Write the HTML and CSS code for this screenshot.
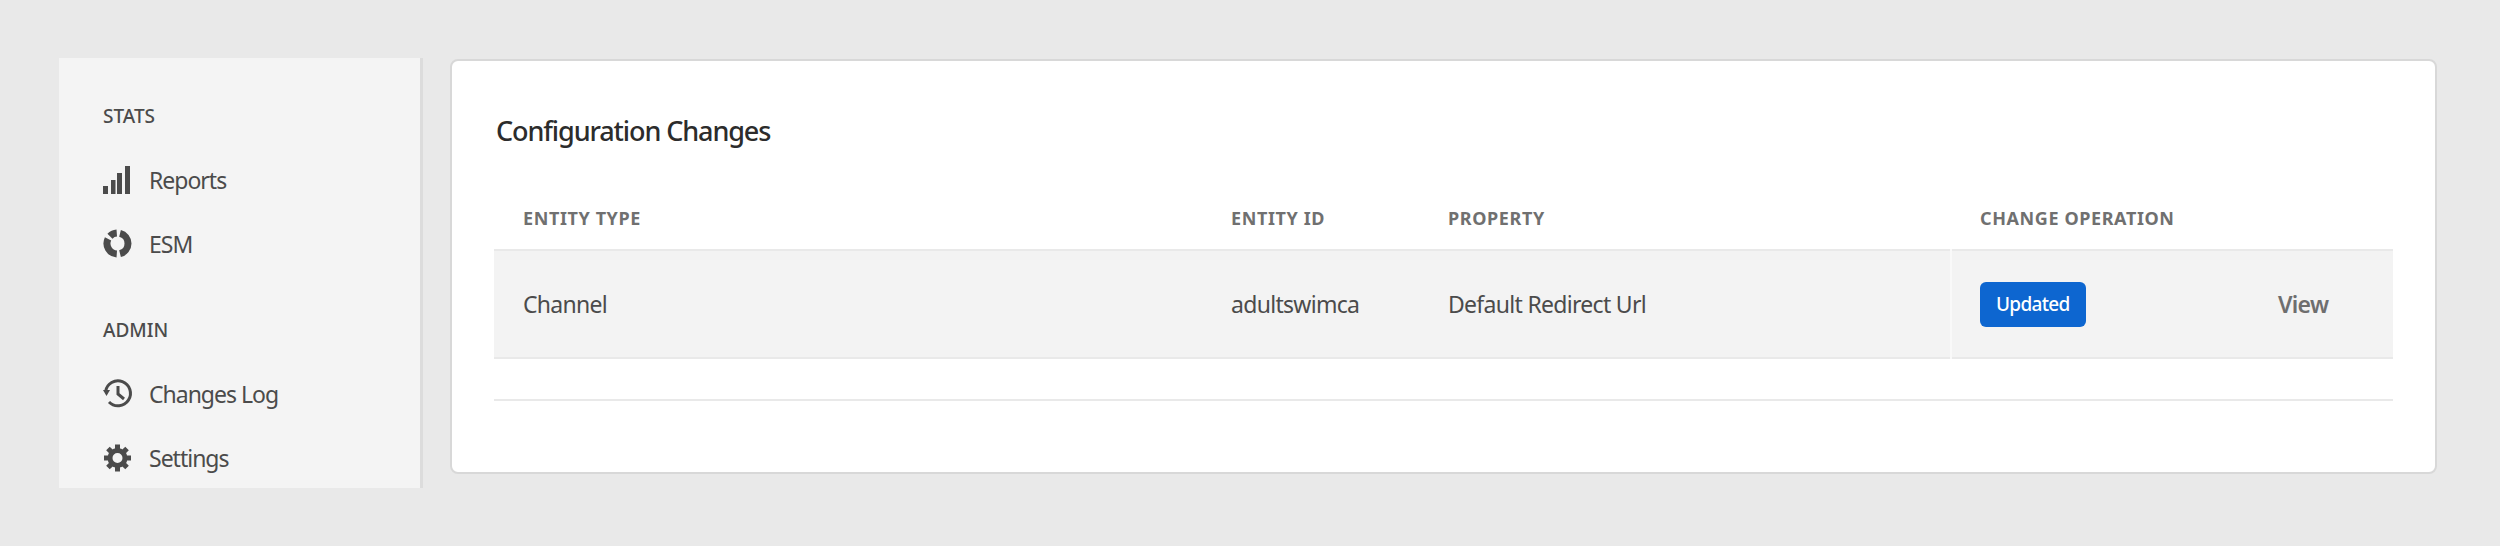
FILE: index.html
```html
<!DOCTYPE html>
<html lang="en">
<head>
    <meta charset="UTF-8">
    <meta name="viewport" content="width=device-width, initial-scale=1.0">
    <title>Configuration Changes</title>
    <link rel="stylesheet" href="styles.css">
</head>
<body>
    <nav class="sidebar">
        <h3 class="nav-label">STATS</h3>
        <a class="nav-item">
            <svg class="nav-icon" viewBox="0 0 30 30"><path d="M0 21h5v8H0zM8 15h4.500v14H8zM14 8h5v21h-5zM22 1h5v28h-5z"/></svg>
            Reports
        </a>
        <a class="nav-item">
            <svg class="nav-icon icon-line icon-thick" viewBox="0 0 30 30"><path d="M17.040 4.310A10.500 10.500 0 0 1 17.040 24.690M13.770 24.970A10.500 10.500 0 0 1 5.060 9.900M6.950 7.210A10.500 10.500 0 0 1 13.770 4.030"/></svg>
            ESM
        </a>
        <h3 class="nav-label nav-label-gap">ADMIN</h3>
        <a class="nav-item">
            <svg class="nav-icon" viewBox="0 0 30 30"><path class="icon-line" d="M2.600 12.500A12.500 12.500 0 1 1 6 23M15 7V15L21 20"/><path d="M0 11H7L3.500 17z"/></svg>
            Changes Log
        </a>
        <a class="nav-item">
            <svg class="nav-icon" viewBox="0 0 30 30"><circle class="icon-ring" cx="14.500" cy="15" r="7.500"/><path class="icon-teeth" d="M14.500 1.500V6M14.500 24V28.500M1 15H5.500M23.500 15H28M4.950 5.450L8.140 8.640M20.860 21.360L24.050 24.550M24.050 5.450L20.860 8.640M8.140 21.360L4.950 24.550"/></svg>
            Settings
        </a>
    </nav>

    <main class="card">
        <h2 class="card-title">Configuration Changes</h2>
        <table class="changes">
            <colgroup>
                <col class="col-type">
                <col class="col-id">
                <col class="col-prop">
                <col class="col-op">
                <col>
            </colgroup>
            <thead>
                <tr>
                    <th>ENTITY TYPE</th>
                    <th>ENTITY ID</th>
                    <th>PROPERTY</th>
                    <th colspan="2">CHANGE OPERATION</th>
                </tr>
            </thead>
            <tbody>
                <tr>
                    <td>Channel</td>
                    <td>adultswimca</td>
                    <td>Default Redirect Url</td>
                    <td class="cell-op"><span class="badge">Updated</span></td>
                    <td class="cell-view"><a class="view-link">View</a></td>
                </tr>
            </tbody>
        </table>
        <div class="table-foot"></div>
    </main>
</body>
</html>
```

FILE: styles.css
```css
* {
    box-sizing: border-box;
}
body {
    font-family: "Noto Sans", Arial, sans-serif;
    margin: 0;
    padding: 58px 63px 0 59px;
    display: flex;
    align-items: flex-start;
    gap: 27px;
    height: 546px;
    overflow: hidden;
    background-color: #e9e9e9;
    color: #4b4b4b;
}
.sidebar {
    flex: 0 0 364px;
    height: 430px;
    padding: 43px 0 0 44px;
    overflow: hidden;
    background-color: #f4f4f4;
    border-right: 3px solid #dcdcdc;
}
.nav-label {
    margin: 0 0 17px;
    font-size: 19px;
    font-weight: 500;
    line-height: 30px;
    color: #4b4b4b;
}
.nav-label-gap {
    margin-top: 39px;
}
.nav-item {
    display: flex;
    align-items: center;
    gap: 16px;
    height: 64px;
    font-size: 23px;
    letter-spacing: -1px;
}
.nav-icon {
    flex: none;
    width: 30px;
    height: 30px;
    fill: #4b4b4b;
    overflow: visible;
}
.icon-line {
    fill: none;
    stroke: #4b4b4b;
    stroke-width: 3;
}
.icon-thick {
    stroke-width: 7;
}
.icon-ring {
    fill: none;
    stroke: #4b4b4b;
    stroke-width: 5;
}
.icon-teeth {
    fill: none;
    stroke: #4b4b4b;
    stroke-width: 5;
}
.card {
    flex: 1;
    height: 415px;
    margin-top: 1px;
    padding: 46px 42px 0;
    background-color: #fff;
    border: 2px solid #d8d8d8;
    border-radius: 8px;
}
.card-title {
    margin: 0 0 35px 2px;
    font-size: 27px;
    font-weight: 500;
    line-height: 48px;
    letter-spacing: -1.1px;
    color: #2c2c2c;
}
.changes {
    width: 100%;
    border-collapse: collapse;
    table-layout: fixed;
}
.changes th {
    height: 60px;
    padding: 0 0 4px 29px;
    text-align: left;
    font-size: 18px;
    font-weight: 700;
    letter-spacing: 0.6px;
    color: #707070;
}
.col-type { width: 708px; }
.col-id { width: 217px; }
.col-prop { width: 532px; }
.col-op { width: 300px; }
.changes tbody tr {
    height: 108px;
    background-color: #f3f3f3;
    border-top: 2px solid #e9e9e9;
    border-bottom: 2px solid #e9e9e9;
}
.changes td {
    padding: 0 0 0 29px;
    font-size: 23px;
    letter-spacing: -0.7px;
}
.changes td.cell-op {
    padding-left: 28px;
    border-left: 2px solid #f9f9f9;
}
.changes td.cell-view {
    padding-left: 27px;
}
.badge {
    display: inline-block;
    padding: 0 16px;
    line-height: 45px;
    font-size: 19px;
    font-weight: 500;
    color: #fff;
    background-color: #0d66d0;
    border-radius: 6px;
}
.view-link {
    font-weight: 600;
    font-size: 23px;
    color: #6e6e6e;
}
.table-foot {
    margin-top: 40px;
    border-top: 2px solid #e9e9e9;
}
```
